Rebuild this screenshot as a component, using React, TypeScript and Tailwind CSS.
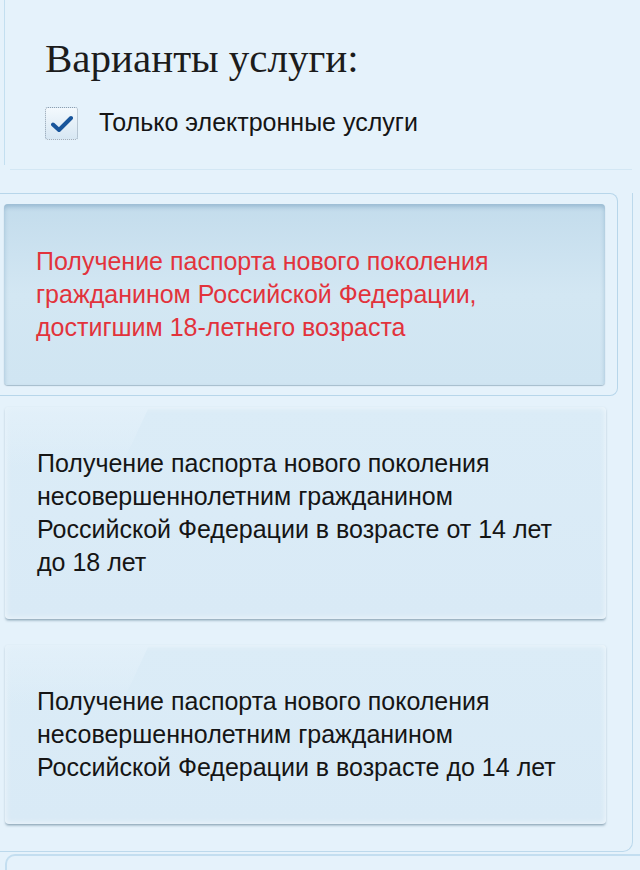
import React from "react";

const items = [
  {
    text: ["Получение паспорта нового поколения", "гражданином Российской Федерации,", "достигшим 18-летнего возраста"],
    active: true,
  },
  {
    text: [
      "Получение паспорта нового поколения",
      "несовершеннолетним гражданином",
      "Российской Федерации в возрасте от 14 лет",
      "до 18 лет",
    ],
    active: false,
  },
  {
    text: ["Получение паспорта нового поколения", "несовершеннолетним гражданином", "Российской Федерации в возрасте до 14 лет"],
    active: false,
  },
];

function Card({ lines, active }: { lines: string[]; active: boolean }) {
  if (active) {
    return (
      <div className="relative w-[601px] rounded-[4px] bg-gradient-to-b from-[#c3dcec] via-[#d3e7f3] to-[#d0e5f2] shadow-[inset_0_3px_4px_rgba(120,160,190,0.55),0_1px_1px_rgba(120,150,170,0.6)] px-[32px] py-[41px]">
        <div className="text-[25px] leading-[33px] text-[#e2333c]">
          {lines.map((l, i) => (
            <div key={i}>{l}</div>
          ))}
        </div>
      </div>
    );
  }
  return (
    <div className="relative w-[601px] overflow-hidden rounded-[4px] bg-gradient-to-b from-[#dbecf7] to-[#d9eaf6] border-b border-[#9fb5c4] shadow-[inset_0_0_6px_rgba(255,255,255,0.7),0_1px_2px_rgba(120,150,170,0.5)] px-[32px] py-[40px]">
      <div className="absolute left-0 top-0 h-[60px] w-[150px] -skew-x-[25deg] -translate-x-[20px] bg-gradient-to-b from-[#e4f1fa] to-transparent opacity-80" />
      <div className="relative text-[25px] leading-[33px] text-[#151515]">
        {lines.map((l, i) => (
          <div key={i}>{l}</div>
        ))}
      </div>
    </div>
  );
}

export default function App() {
  return (
    <div className="w-[640px] h-[870px] overflow-hidden bg-[#e5f2fb] font-[family-name:Liberation_Sans,Arial,sans-serif]">
      {/* Top panel */}
      <div className="relative h-[170px]">
        <div className="absolute left-[4px] top-0 h-[165px] border-l border-[#c3dff0]" />
        <div className="absolute left-[10px] right-[8px] bottom-0 border-b border-[#d3e7f4]" />
        <div className="pl-[45px] pt-[34px]">
          <h1 className="font-[family-name:Liberation_Serif,Times_New_Roman,serif] text-[41px] leading-[48px] text-[#1c1c1c]">
            Варианты услуги:
          </h1>
          <label className="mt-[25px] flex items-center gap-[21px]">
            <span className="flex h-[33px] w-[33px] items-center justify-center rounded-[3px] border border-dotted border-[#8d9fb0] bg-gradient-to-b from-[#f3f9fd] to-[#d7e7f3]">
              <svg width="22" height="18" viewBox="0 0 22 18">
                <path d="M2 9.5 L8 15 L20 3" fill="none" stroke="#18559b" strokeWidth="4" strokeLinecap="round" strokeLinejoin="round" />
              </svg>
            </span>
            <span className="-mt-[4px] text-[25px] leading-[28px] text-[#151515]">Только электронные услуги</span>
          </label>
        </div>
      </div>

      {/* List */}
      <div className="pt-[23px]">
        <div className="w-[633px] rounded-br-[10px] border-r border-b border-[#bcd9ec] pb-[26px]">
          <div className="w-[618px] rounded-r-[8px] border-t border-r border-b border-[#b7d6ea] pl-[4px] pt-[10px] pb-[10px]">
            <Card lines={items[0].text} active />
          </div>
          <div className="mt-[11px] pl-[5px]">
            <Card lines={items[1].text} active={false} />
          </div>
          <div className="mt-[25px] pl-[5px]">
            <Card lines={items[2].text} active={false} />
          </div>
        </div>
        <div className="ml-[5px] mt-[2px] h-[20px] rounded-tl-[10px] border-t-2 border-l-2 border-[#c3def0]" />
      </div>
    </div>
  );
}
